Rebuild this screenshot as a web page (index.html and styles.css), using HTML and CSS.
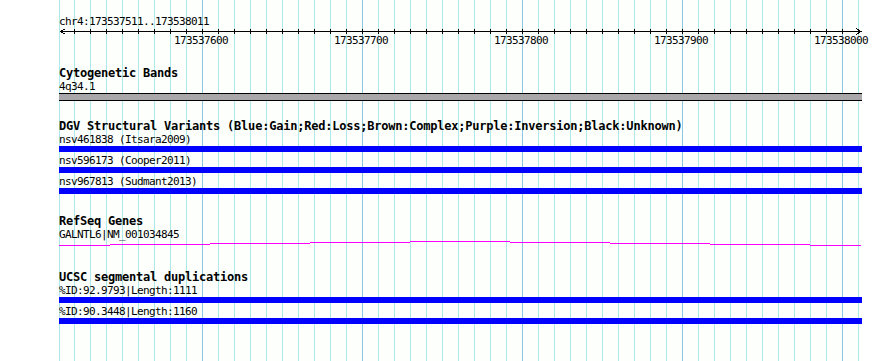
FILE: index.html
```html
<!DOCTYPE html>
<html lang="en">
  <head>
    <meta charset="UTF-8" />
    <title>chr4:173537511..173538011</title>
    <link rel="stylesheet" href="styles.css">
  </head>
  <body>
    <div class="panel">
      <div class="ruler-title">chr4:173537511..173538011</div>
      <svg class="ruler" width="803" height="20" viewBox="0 0 803 20">
        <path class="axis" d="M1 3.5H802" />
        <polyline class="axis" points="6.5,0.5 1.5,3.5 6.5,6.5" />
        <polyline class="axis" points="797.5,0.5 802,3.5 797.5,6.5" />
        <path class="axis" d="M15.5 1V6M31.5 1V6M47.5 1V6M63.5 1V6M79.5 1V6M95.5 1V6M111.5 1V6M127.5 1V6M143.5 1V6M159.5 1V6M175.5 1V6M191.5 1V6M207.5 1V6M223.5 1V6M239.5 1V6M255.5 1V6M271.5 1V6M287.5 1V6M303.5 1V6M319.5 1V6M335.5 1V6M351.5 1V6M367.5 1V6M383.5 1V6M399.5 1V6M415.5 1V6M431.5 1V6M447.5 1V6M463.5 1V6M479.5 1V6M495.5 1V6M511.5 1V6M527.5 1V6M543.5 1V6M559.5 1V6M575.5 1V6M591.5 1V6M607.5 1V6M623.5 1V6M639.5 1V6M655.5 1V6M671.5 1V6M687.5 1V6M703.5 1V6M719.5 1V6M735.5 1V6M751.5 1V6M767.5 1V6M783.5 1V6M799.5 1V6" />
        <text class="tick-label" x="115" y="16">173537600</text>
        <text class="tick-label" x="275" y="16">173537700</text>
        <text class="tick-label" x="435" y="16">173537800</text>
        <text class="tick-label" x="595" y="16">173537900</text>
        <text class="tick-label" x="755" y="16">173538000</text>
      </svg>

      <section class="track">
        <div class="track-title">Cytogenetic Bands</div>
        <div class="feature-label">4q34.1</div>
        <div class="band"></div>
      </section>

      <section class="track">
        <div class="track-title">DGV Structural Variants (Blue:Gain;Red:Loss;Brown:Complex;Purple:Inversion;Black:Unknown)</div>
        <div class="feature">
          <div class="feature-label">nsv461838 (Itsara2009)</div>
          <div class="bar"></div>
        </div>
        <div class="feature">
          <div class="feature-label">nsv596173 (Cooper2011)</div>
          <div class="bar"></div>
        </div>
        <div class="feature">
          <div class="feature-label">nsv967813 (Sudmant2013)</div>
          <div class="bar"></div>
        </div>
      </section>

      <section class="track">
        <div class="track-title">RefSeq Genes</div>
        <div class="feature">
          <div class="feature-label">GALNTL6|NM_001034845</div>
          <svg class="gene" width="803" height="9" viewBox="0 0 803 9">
            <path d="M0 4.5H51M51 3.5H151M151 2.5H251M251 1.5H351M351 0.5H451M451 1.5H551M551 2.5H651M651 3.5H751M751 4.5H802" />
          </svg>
        </div>
      </section>

      <section class="track">
        <div class="track-title">UCSC segmental duplications</div>
        <div class="feature">
          <div class="feature-label">%ID:92.9793|Length:1111</div>
          <div class="bar"></div>
        </div>
        <div class="feature">
          <div class="feature-label">%ID:90.3448|Length:1160</div>
          <div class="bar"></div>
        </div>
      </section>
    </div>
  </body>
</html>
```

FILE: styles.css
```css
body {
  margin: 0;
  background-color: #fff;
  color: #000;
  font-family: "DejaVu Sans Mono", monospace;
}

.panel {
  width: 803px;
  min-height: 361px;
  margin-left: 59px;
  padding-top: 15px;
  box-sizing: border-box;
  background:
    linear-gradient(to right, #ade8ea 1px, transparent 1px) 0 0 / 1px 100% no-repeat,
    linear-gradient(to right, #8cc8e4 1px, transparent 1px) 143px 0 / 160px 100%,
    linear-gradient(to right, #ade8ea 1px, transparent 1px) 15px 0 / 16px 100%,
    #fcfffc;
}

.ruler-title,
.feature-label {
  font-size: 11px;
  line-height: 13px;
  letter-spacing: -0.62px;
  white-space: nowrap;
}

.ruler {
  display: block;
  overflow: visible;
}

.axis {
  fill: none;
  stroke: #000;
  stroke-width: 1;
  shape-rendering: crispEdges;
}

.tick-label {
  font-family: "DejaVu Sans Mono", monospace;
  font-size: 11px;
  letter-spacing: -0.62px;
  fill: #000;
}

.track {
  margin-top: 19px;
}

.track-title {
  font-size: 12px;
  font-weight: bold;
  line-height: 13px;
  letter-spacing: -0.22px;
  white-space: nowrap;
}

.band {
  height: 6px;
  border-top: 1px solid #000;
  border-bottom: 1px solid #000;
  background-color: #a9a7a9;
}

.feature {
  padding-bottom: 2px;
}

.bar {
  height: 6px;
  background-color: #0000ff;
}

.gene {
  display: block;
}

.gene path {
  fill: none;
  stroke: #ff00ff;
  stroke-width: 1;
  shape-rendering: crispEdges;
}
```
